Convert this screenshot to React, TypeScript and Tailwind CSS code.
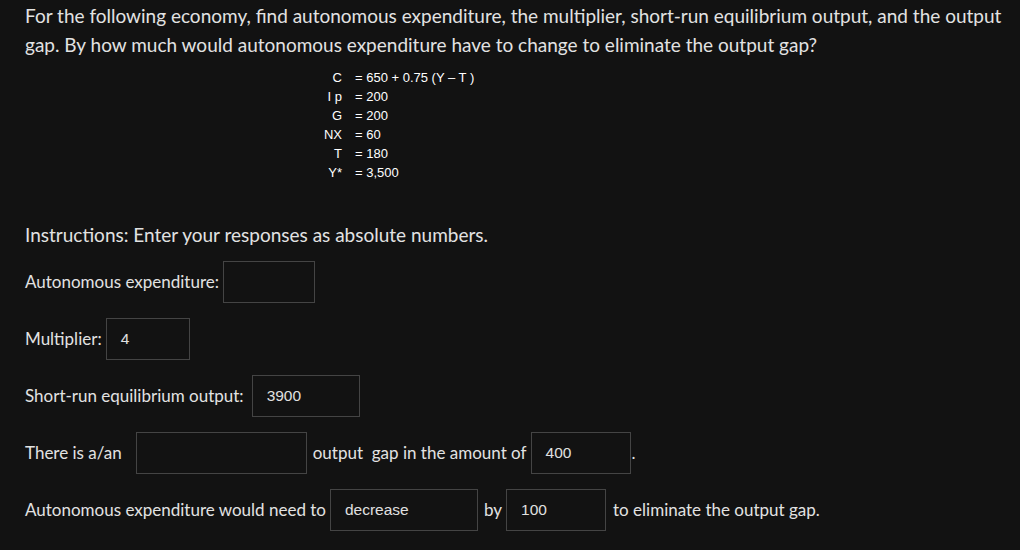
const sans = "font-['Lato','Open_Sans',sans-serif]";

function Box({ value, w }: { value?: string; w: string }) {
  return (
    <span
      className={`inline-flex h-[42px] ${w} shrink-0 items-center border border-[#444] bg-[#121212] px-[14px] font-['Liberation_Sans',Arial,sans-serif] text-[15.5px] text-[#e0e0e0]`}
    >
      {value}
    </span>
  );
}

const equations = [
  ["C", "= 650 + 0.75 (Y – T )"],
  ["I p", "= 200"],
  ["G", "= 200"],
  ["NX", "= 60"],
  ["T", "= 180"],
  ["Y*", "= 3,500"],
];

export default function App() {
  return (
    <div className={`min-h-[550px] w-[1020px] bg-[#121212] px-[25px] pt-[1px] text-[#e2e2e2] ${sans}`}>
      <p className="whitespace-nowrap text-[19px] leading-[29px]">
        For the following economy, find autonomous expenditure, the multiplier, short-run equilibrium output, and the output
        <br />
        gap. By how much would autonomous expenditure have to change to eliminate the output gap?
      </p>

      <div className="mt-[9px] grid grid-cols-[auto_auto] justify-start gap-x-[13px] pl-[297px] font-['Liberation_Sans',Arial,sans-serif] text-[13px] leading-[19px] text-white">
        {equations.map(([k, v]) => (
          <div key={k} className="contents">
            <span className="w-[20px] text-right">{k}</span>
            <span>{v}</span>
          </div>
        ))}
      </div>

      <p className="mt-[38px] text-[19px] leading-[29px]">Instructions: Enter your responses as absolute numbers.</p>

      <div className="mt-[12px] flex flex-col gap-[15px] text-[17px]">
        <div className="flex items-center gap-[4px]">
          <span>Autonomous expenditure:</span>
          <Box w="w-[92px]" />
        </div>
        <div className="flex items-center gap-[4px]">
          <span>Multiplier:</span>
          <Box w="w-[84px]" value="4" />
        </div>
        <div className="flex items-center gap-[4px]">
          <span className="mr-[4px]">Short-run equilibrium output:</span>
          <Box w="w-[108px]" value="3900" />
        </div>
        <div className="flex items-center gap-[4px]">
          <span className="mr-[10px]">There is a/an</span>
          <Box w="w-[171px]" />
          <span className="ml-[2px]">output&nbsp; gap in the amount of</span>
          <Box w="w-[100px]" value="400" />
          <span className="-ml-[3px]">.</span>
        </div>
        <div className="flex items-center gap-[4px]">
          <span>Autonomous expenditure would need to</span>
          <Box w="w-[148px]" value="decrease" />
          <span className="ml-[2px]">by</span>
          <Box w="w-[100px]" value="100" />
          <span className="ml-[3px]">to eliminate the output gap.</span>
        </div>
      </div>
    </div>
  );
}
